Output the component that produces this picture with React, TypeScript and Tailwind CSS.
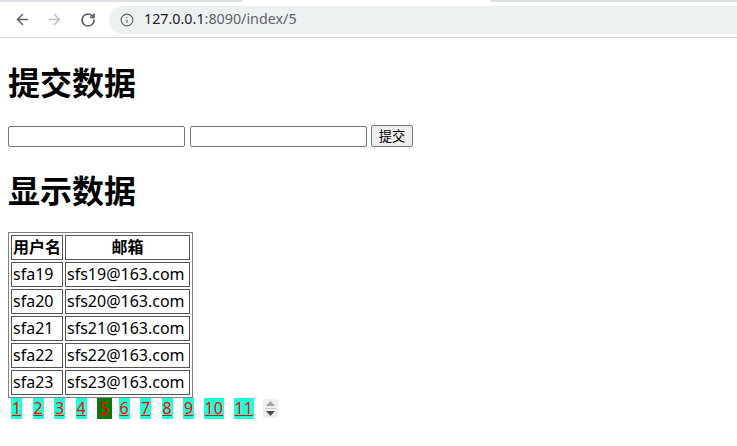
import { ArrowLeft, ArrowRight, RotateCw, Info } from 'lucide-react';

const users = [
  { name: 'sfa19', email: 'sfs19@163.com' },
  { name: 'sfa20', email: 'sfs20@163.com' },
  { name: 'sfa21', email: 'sfs21@163.com' },
  { name: 'sfa22', email: 'sfs22@163.com' },
  { name: 'sfa23', email: 'sfs23@163.com' },
];

const pages = ['1', '2', '3', '4', '5', '6', '7', '8', '9', '10', '11'];

const BrowserBar = () => (
  <div className="bg-white border-b border-[#dadce0]">
    <div className="flex h-[2px]">
      <div className="w-[243px] bg-[#dee1e6] rounded-br-[2px]" />
      <div className="w-[247px] bg-white" />
      <div className="flex-1 bg-[#dee1e6] rounded-bl-[2px]" />
    </div>
    <div className="flex items-center h-[35px]">
      <div className="w-[14px]" />
      <ArrowLeft className="w-[17px] h-[17px] text-[#5f6368]" strokeWidth={2.2} />
      <div className="w-[15px]" />
      <ArrowRight className="w-[17px] h-[17px] text-[#bdc1c6]" strokeWidth={2.2} />
      <div className="w-[17px]" />
      <RotateCw className="w-[16px] h-[16px] text-[#5f6368]" strokeWidth={2.6} />
      <div className="flex-1 ml-[13px] h-[28px] bg-[#eef1f2] rounded-l-[14px] flex items-center pl-[11px]">
        <Info className="w-[14px] h-[14px] text-[#5f6368]" strokeWidth={2} />
        <span className="ml-[10px] text-[14.3px] font-['Noto_Sans',sans-serif] leading-none">
          <span className="text-[#202124]">127.0.0.1</span>
          <span className="text-[#5f6368]">:8090/index/5</span>
        </span>
      </div>
    </div>
  </div>
);

const Spinner = () => (
  <div className="w-[15px] h-[19px] bg-[#efefef] flex flex-col items-center justify-center gap-[2px] mt-[1px]">
    <svg width="9" height="5" viewBox="0 0 9 5">
      <path d="M0 5 L4.5 0 L9 5 Z" fill="#a3a3a3" />
    </svg>
    <div className="w-[11px] h-px bg-[#c8c8c8]" />
    <svg width="9" height="5" viewBox="0 0 9 5">
      <path d="M0 0 L9 0 L4.5 5 Z" fill="#4a4a4a" />
    </svg>
  </div>
);

export default function App() {
  return (
    <div className="min-h-screen bg-white text-black font-['Noto_Sans','Noto_Sans_CJK_SC',sans-serif] text-[16px]">
      <BrowserBar />
      <div className="px-2 pb-2">
        <h1 className="mt-[22px] mb-[21px] text-[32px] leading-[42px] font-bold font-['Noto_Sans_CJK_SC',sans-serif]">
          提交数据
        </h1>
        <div className="flex items-end h-[24px]">
          <input type="text" className="w-[177px] h-[21px] border border-[#767676] rounded-[2px] bg-white" />
          <input type="text" className="ml-[5px] w-[177px] h-[21px] border border-[#767676] rounded-[2px] bg-white" />
          <button className="ml-[4px] w-[42px] h-[22px] border border-[#767676] rounded-[2px] bg-[#efefef] text-[13.3px] leading-[20px] font-['Noto_Sans_CJK_SC',sans-serif]">
            提交
          </button>
        </div>
        <h1 className="mt-[21px] mb-[22px] text-[32px] leading-[42px] font-bold font-['Noto_Sans_CJK_SC',sans-serif]">
          显示数据
        </h1>
        <table className="border-separate border-spacing-[2px] border border-[#808080]">
          <thead>
            <tr>
              <th className="w-[52px] border border-[#555] p-px leading-[21px] font-bold text-center">用户名</th>
              <th className="w-[125px] border border-[#555] p-px leading-[21px] font-bold text-center">邮箱</th>
            </tr>
          </thead>
          <tbody>
            {users.map((u) => (
              <tr key={u.name}>
                <td className="border border-[#555] p-px leading-[21px]">{u.name}</td>
                <td className="border border-[#555] p-px leading-[21px]">{u.email}</td>
              </tr>
            ))}
          </tbody>
        </table>
        <div className="flex items-start ml-[3px]">
          {pages.map((p, i) => {
            const active = p === '5';
            const wide = p.length > 1;
            const width = active ? 'w-[15px]' : wide ? 'w-[20.5px]' : 'w-[11px]';
            const margin = i === 0 ? '' : pages[i - 1] === '5' ? 'ml-[6.5px]' : wide ? 'ml-[9.5px]' : 'ml-[10.5px]';
            return (
              <a
                key={p}
                href="#"
                className={`${width} ${margin} h-[21px] leading-[21px] text-center text-[#ff0000] underline ${
                  active ? 'bg-[#0b780b]' : 'bg-[#1effd6]'
                }`}
              >
                {p}
              </a>
            );
          })}
          <div className="ml-[8.5px]">
            <Spinner />
          </div>
        </div>
      </div>
    </div>
  );
}
